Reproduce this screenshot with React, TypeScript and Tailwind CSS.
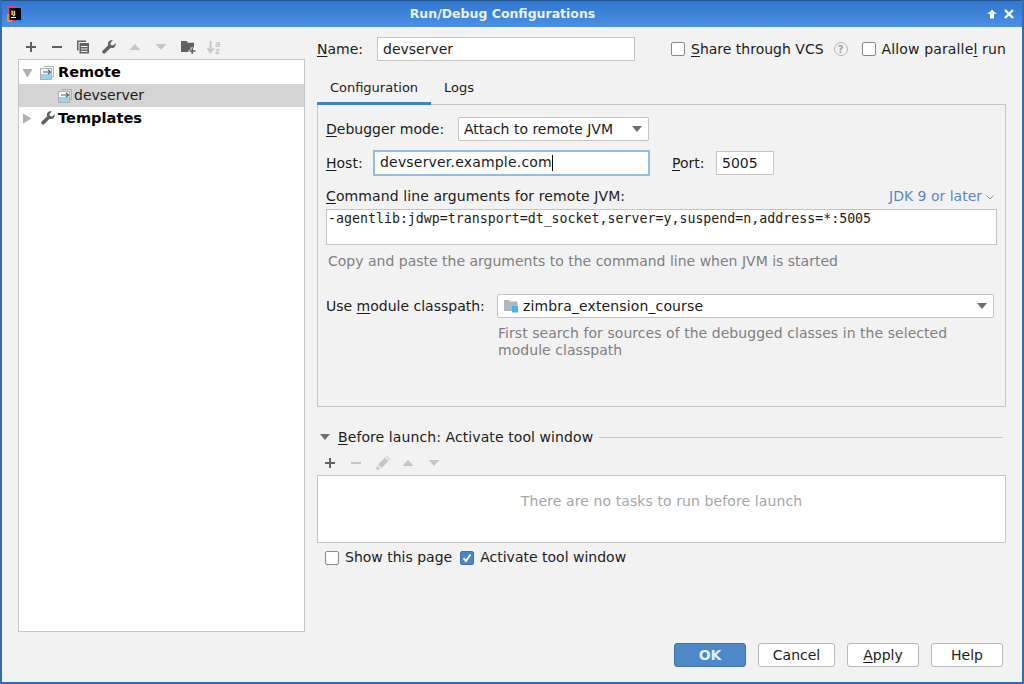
import type { ReactNode } from "react";

const sans = "font-['DejaVu_Sans',sans-serif]";

function U({ children }: { children: ReactNode }) {
  return <span className="underline underline-offset-2 decoration-1">{children}</span>;
}

function Check({ on }: { on?: boolean }) {
  return on ? (
    <span className="w-[14px] h-[14px] rounded-[2px] bg-[#4a86c8] border border-[#3d74b0] flex items-center justify-center shrink-0">
      <svg width="10" height="10" viewBox="0 0 10 10"><path d="M1.5 5.2 4 8 8.5 1.5" fill="none" stroke="#fff" strokeWidth="1.8" /></svg>
    </span>
  ) : (
    <span className="w-[14px] h-[14px] rounded-[2px] bg-white border border-[#8a8a8a] shrink-0" />
  );
}

function Caret({ color = "#6e6e6e" }: { color?: string }) {
  return <svg width="10" height="6" viewBox="0 0 10 6"><path d="M0 0h10L5 6z" fill={color} /></svg>;
}

function Plus() {
  return <svg width="12" height="12" viewBox="0 0 12 12"><path d="M5 1h2v4h4v2H7v4H5V7H1V5h4z" fill="#5f6265" /></svg>;
}

function Minus({ color = "#5f6265" }: { color?: string }) {
  return <svg width="12" height="12" viewBox="0 0 12 12"><rect x="1" y="5" width="10" height="2" fill={color} /></svg>;
}

function Up() {
  return <svg width="12" height="8" viewBox="0 0 12 8"><path d="M6 1l5.5 6H.5z" fill="#c4c6c8" /></svg>;
}

function Down() {
  return <svg width="12" height="8" viewBox="0 0 12 8"><path d="M.5 1h11L6 7z" fill="#c4c6c8" /></svg>;
}

function Wrench({ size = 14 }: { size?: number }) {
  return (
    <svg width={size} height={size} viewBox="0 0 14 14">
      <path d="M13.5 3.2 11 5.6 8.9 5 8.4 3l2.4-2.5C9 0 7.2.6 6.4 2 5.8 3 5.8 4.2 6.2 5.2L.8 10.6a1.7 1.7 0 0 0 2.5 2.5L8.700 7.800c1.100.4 2.300.3 3.300-.4 1.300-.9 1.900-2.600 1.500-4.200z" fill="#5f6265" />
    </svg>
  );
}

function RemoteIcon() {
  return (
    <svg width="16" height="14" viewBox="0 0 16 14">
      <path d="M3.500.5h10v10H12" fill="none" stroke="#a7b1b8" />
      <rect x=".5" y="2.500" width="11" height="11" fill="#f6f8f9" stroke="#a7b1b8" />
      <rect x="1" y="8" width="10" height="5" fill="#9bd3ea" />
      <path d="M3 6h7.500M8 3.800l2.500 2.200L8 8.200" fill="none" stroke="#5f6265" strokeWidth="1.200" />
    </svg>
  );
}

function Toolbar() {
  return (
    <div className="h-[24px] flex items-center pl-[7px]">
      <span className="w-[26px] flex"><Plus /></span>
      <span className="w-[25px] flex"><Minus /></span>
      <span className="w-[26px] flex">
        <svg width="14" height="14" viewBox="0 0 14 14">
          <path d="M1 .5h9V2H2.500v8.500H1z" fill="#5f6265" />
          <path fillRule="evenodd" d="M3.500 3h9.500v10.500H3.500zM5 6v1h6.500V6zm0 2.500v1h6.500v-1zM5 11v1h6.500v-1z" fill="#5f6265" />
        </svg>
      </span>
      <span className="w-[27px] flex"><Wrench /></span>
      <span className="w-[26px] flex"><Up /></span>
      <span className="w-[26px] flex"><Down /></span>
      <span className="w-[26px] flex">
        <svg width="15" height="14" viewBox="0 0 15 14">
          <path d="M0 1h5.500l1.500 1.700h6V7.500H9.500V10H7.500v2H0z" fill="#5f6265" />
          <path d="M10.500 8H12v2.200h2.500v1.500H12V14h-1.500v-2.300H8.500v-1.500h2z" fill="#5f6265" />
        </svg>
      </span>
      <span className="flex items-center">
        <svg width="14" height="15" viewBox="0 0 14 15">
          <path d="M3.500 1v9.500M.5 8l3 4.500 3-4.500" fill="none" stroke="#c4c6c8" strokeWidth="1.800" />
          <text x="8" y="6.500" fontSize="8" fontWeight="bold" fill="#c4c6c8" fontFamily="DejaVu Sans">a</text>
          <text x="8" y="14" fontSize="8" fontWeight="bold" fill="#c4c6c8" fontFamily="DejaVu Sans">z</text>
        </svg>
      </span>
    </div>
  );
}

function Tree() {
  return (
    <div className="flex-1 bg-white border border-[#c4c4c4] pt-[1px]">
      <div className="h-[23px] flex items-center pl-[3px]">
        <svg width="11" height="10" viewBox="0 0 11 10"><path d="M.5 1h10L5.500 9.500z" fill="#b0b0b0" /></svg>
        <span className="ml-[7px] flex"><RemoteIcon /></span>
        <span className="ml-[2px] font-bold text-[14.5px] text-black">Remote</span>
      </div>
      <div className="h-[23px] flex items-center pl-[39px] bg-[#d4d4d4]">
        <RemoteIcon />
        <span className="text-[14px] text-[#1c1c1c]">devserver</span>
      </div>
      <div className="h-[22px] flex items-center pl-[3px]">
        <svg width="10" height="11" viewBox="0 0 10 11"><path d="M1 .5 9.500 5.500 1 10.500z" fill="#b0b0b0" /></svg>
        <span className="ml-[9px] flex"><Wrench /></span>
        <span className="ml-[3px] font-bold text-[14.6px] text-black">Templates</span>
      </div>
    </div>
  );
}

function NameRow() {
  return (
    <div className="h-[24px] flex items-center">
      <span className="w-[60px]"><U>N</U>ame:</span>
      <div className="w-[258px] h-[24px] bg-white border border-[#c4c4c4] pl-[5px] flex items-center">devserver</div>
      <span className="ml-[36px] flex items-center">
        <Check />
        <span className="ml-[6px]"><U>S</U>hare through VCS</span>
        <span className="ml-[10px] w-[14px] h-[14px] rounded-full border border-[#b4b4b4] text-[#a0a0a0] text-[10px] font-bold flex items-center justify-center">?</span>
      </span>
      <span className="ml-[14px] flex items-center">
        <Check />
        <span className="ml-[6px] whitespace-nowrap tracking-[0.14px]">Allow paralle<U>l</U> run</span>
      </span>
    </div>
  );
}

function Tabs() {
  return (
    <div className="flex h-[36px] mt-[8px]">
      <div className="w-[114px] border-b-[3px] border-[#4083c9] text-[13px] flex items-start pt-[9px] justify-center">Configuration</div>
      <div className="w-[56px] text-[13px] flex items-start pt-[9px] justify-center">Logs</div>
    </div>
  );
}

function ConfigPanel() {
  return (
    <div className="h-[303px] border border-[#c4c4c4] -mt-[1px] pl-[8px] pr-[8px] pt-[12px]">
      <div className="h-[24px] flex items-center">
        <span className="w-[132px]"><U>D</U>ebugger mode:</span>
        <div className="w-[191px] h-[24px] bg-white border border-[#c4c4c4] rounded-[2px] pl-[5px] pr-[6px] flex items-center justify-between">
          Attach to remote JVM
          <Caret />
        </div>
      </div>
      <div className="h-[26px] mt-[9px] flex items-center">
        <span className="w-[47px]"><U>H</U>ost:</span>
        <div className="w-[277px] h-[26px] bg-white border-2 border-[#8fbce8] pl-[5px] pb-[1px] flex items-center tracking-[0.19px]">
          devserver.example.com<span className="w-[1px] h-[16px] bg-black" />
        </div>
        <span className="ml-[22px] w-[44px]"><U>P</U>ort:</span>
        <div className="w-[58px] h-[24px] bg-white border border-[#c4c4c4] pl-[5px] flex items-center">5005</div>
      </div>
      <div className="h-[18px] mt-[11px] flex items-center justify-between pr-[3px]">
        <span className="tracking-[0.1px]"><U>C</U>ommand line arguments for remote JVM:</span>
        <span className="text-[#5b85cf] flex items-center">
          JDK 9 or later
          <svg className="ml-[4px] mt-[2px]" width="8" height="5" viewBox="0 0 8 5"><path d="M.5.5 4 4 7.500.5" fill="none" stroke="#8d9296" /></svg>
        </span>
      </div>
      <div className="h-[36px] mt-[4px] bg-white border border-[#c4c4c4] pl-[1px] pt-[1px] font-['DejaVu_Sans_Mono',monospace] text-[13.28px] leading-[16px]">
        -agentlib:jdwp=transport=dt_socket,server=y,suspend=n,address=*:5005
      </div>
      <div className="mt-[6px] ml-[2px] text-[#808080]">Copy and paste the arguments to the command line when JVM is started</div>
      <div className="h-[24px] mt-[22px] flex items-center">
        <span className="w-[171px]">Use <U>m</U>odule classpath:</span>
        <div className="w-[497px] h-[24px] bg-white border border-[#c4c4c4] rounded-[2px] pl-[6px] pr-[6px] flex items-center justify-between">
          <span className="flex items-center tracking-[0.13px]">
            <svg className="mr-[4px]" width="15" height="14" viewBox="0 0 15 14">
              <path d="M0 1h5l1.500 1.500h7V12H0z" fill="#aeb8bf" />
              <rect x="8" y="7" width="6" height="6.500" fill="#46b4e4" />
            </svg>
            zimbra_extension_course
          </span>
          <Caret />
        </div>
      </div>
      <div className="mt-[7px] ml-[172px] w-[480px] text-[#808080] leading-[17px] tracking-[0.05px]">
        First search for sources of the debugged classes in the selected module classpath
      </div>
    </div>
  );
}

function BeforeLaunch() {
  return (
    <div className="mt-[21px]">
      <div className="h-[18px] flex items-center pl-[3px] pr-[3px]">
        <Caret />
        <span className="ml-[8px] whitespace-nowrap tracking-[0.09px]"><U>B</U>efore launch: Activate tool window</span>
        <span className="flex-1 ml-[6px] h-[1px] bg-[#c8c8c8]" />
      </div>
      <div className="h-[29px] pt-[4px] flex items-center pl-[7px] gap-[10px]">
        <span className="flex w-[16px]"><Plus /></span>
        <span className="flex w-[16px]"><Minus color="#c4c6c8" /></span>
        <span className="flex w-[16px]">
          <svg width="14" height="14" viewBox="0 0 14 14"><path d="M0 14l1-4.500 3.500 3.500zM2 8.500 9 1.500l3.500 3.500-7 7zM10 .5l1-.5 3 3-.5 1z" fill="#c4c6c8" /></svg>
        </span>
        <span className="flex w-[16px]"><Up /></span>
        <span className="flex w-[16px]"><Down /></span>
      </div>
      <div className="h-[68px] pb-[16px] bg-white border border-[#c4c4c4] flex items-center justify-center text-[#a6a6a6] tracking-[0.1px]">
        There are no tasks to run before launch
      </div>
      <div className="h-[17px] mt-[6px] pl-[8px] flex items-center">
        <Check />
        <span className="ml-[6px]">Show this page</span>
        <span className="ml-[8px] flex"><Check on /></span>
        <span className="ml-[6px]">Activate tool window</span>
      </div>
    </div>
  );
}

function Btn({ children, primary, w }: { children: ReactNode; primary?: boolean; w: string }) {
  return (
    <div className={`${w} h-[24px] rounded-[3px] border flex items-center justify-center ${primary ? "bg-[#4d88c9] border-[#3f75b3] text-[#e4eef8] font-bold" : "bg-white border-[#b8b8b8] text-[#1c1c1c]"}`}>
      {children}
    </div>
  );
}

export default function App() {
  return (
    <div className={`${sans} w-[1024px] h-[684px] flex flex-col bg-[#f2f2f2] border-x-2 border-b-2 border-[#2f6db5] text-[14px] text-[#1c1c1c] overflow-hidden`}>
      <div className="h-[27px] shrink-0 -mx-[2px] bg-gradient-to-b from-[#3176cf] to-[#4b90e2] border-t border-[#24558f] flex items-center px-[7px] relative">
        <svg width="16" height="16" viewBox="0 0 16 16">
          <rect width="16" height="16" fill="#f0368c" />
          <path d="M8 0h8v16H8z" fill="#2f7fe8" />
          <path d="M0 8h5v8H0z" fill="#f58a2b" />
          <rect x="2.500" y="2" width="11.500" height="12" fill="#000" />
          <rect x="4" y="11" width="5" height="1" fill="#fff" />
          <text x="4" y="9" fontSize="6" fontWeight="bold" fill="#fff" fontFamily="DejaVu Sans">IJ</text>
        </svg>
        <span className="flex-1 text-center font-bold text-[12.5px] text-[#e8f0fa] -ml-[16px] pr-[19px] mt-[1px]">Run/Debug Configurations</span>
        <span className="absolute right-[27px] top-[8px] flex">
          <svg width="10" height="10" viewBox="0 0 10 10"><path d="M5 .5 9.500 5H7v4.500H3V5H.5z" fill="#fff" /></svg>
        </span>
        <span className="absolute right-[9px] top-[7px] flex">
          <svg width="12" height="12" viewBox="0 0 12 12"><path d="M2 2l8 8M10 2l-8 8" stroke="#fff" strokeWidth="2.400" /></svg>
        </span>
      </div>
      <div className="flex-1 flex flex-col pl-[16px] pr-[16px] pt-[8px] min-h-0">
        <div className="flex gap-[12px]">
          <div className="w-[287px] h-[597px] flex flex-col">
            <Toolbar />
            <Tree />
          </div>
          <div className="w-[689px] pt-[2px]">
            <NameRow />
            <Tabs />
            <ConfigPanel />
            <BeforeLaunch />
          </div>
        </div>
        <div className="flex justify-end gap-[12px] mt-[11px] pr-[3px]">
          <Btn primary w="w-[72px]">OK</Btn>
          <Btn w="w-[77px]">Cancel</Btn>
          <Btn w="w-[72px]"><span><U>A</U>pply</span></Btn>
          <Btn w="w-[72px]">Help</Btn>
        </div>
      </div>
    </div>
  );
}
